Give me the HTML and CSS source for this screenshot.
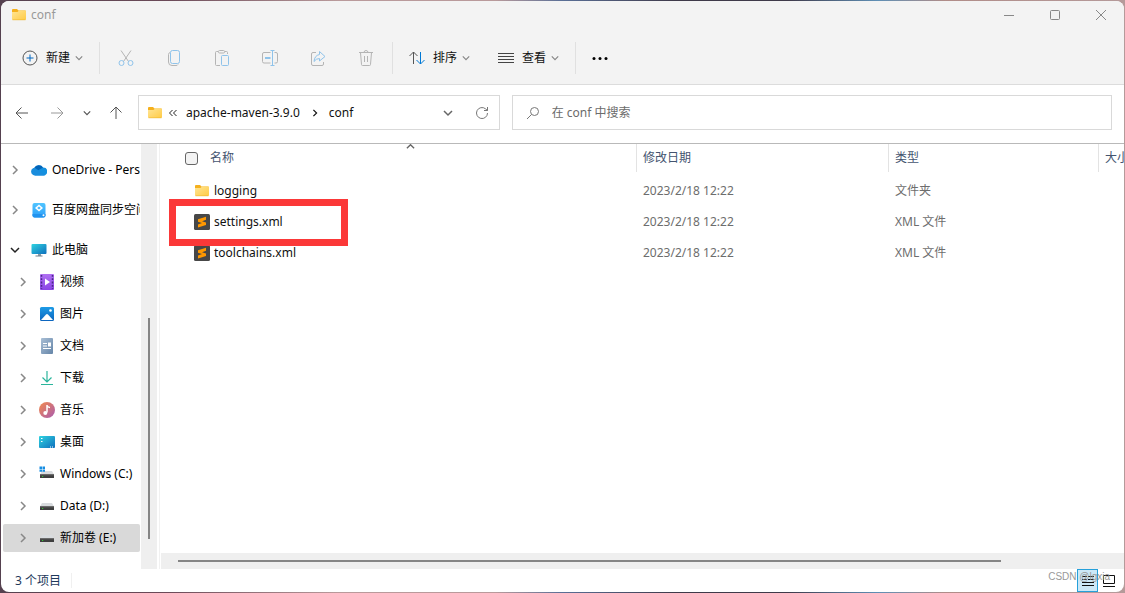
FILE: index.html
```html
<!DOCTYPE html>
<html lang="zh-CN">
<head>
<meta charset="utf-8">
<title>conf</title>
<link rel="stylesheet" href="styles.css">
</head>
<body>
<svg class="defs" aria-hidden="true">
  <defs>
    <linearGradient id="g-folder" x1="0" y1="0" x2="1" y2="1"><stop offset="0" stop-color="#ffe596"/><stop offset="1" stop-color="#ffcb45"/></linearGradient>
    <linearGradient id="g-screen" x1="0" y1="0" x2="1" y2="1"><stop offset="0" stop-color="#2fd3e0"/><stop offset="1" stop-color="#0f6fbd"/></linearGradient>
    <linearGradient id="g-video" x1="0" y1="0" x2="0" y2="1"><stop offset="0" stop-color="#b070f2"/><stop offset="1" stop-color="#8a45e6"/></linearGradient>
    <linearGradient id="g-pic" x1="0" y1="0" x2="0" y2="1"><stop offset="0" stop-color="#1d9be6"/><stop offset="1" stop-color="#0c64bd"/></linearGradient>
    <linearGradient id="g-doc" x1="0" y1="0" x2="1" y2="1"><stop offset="0" stop-color="#a9bfd6"/><stop offset="1" stop-color="#6585a8"/></linearGradient>
    <linearGradient id="g-music" x1="0" y1="0" x2="1" y2="1"><stop offset="0" stop-color="#f38a4c"/><stop offset="1" stop-color="#a95bb0"/></linearGradient>
    <linearGradient id="g-sync" x1="0" y1="0" x2="0" y2="1"><stop offset="0" stop-color="#51c5ff"/><stop offset="1" stop-color="#2a9df8"/></linearGradient>
    <symbol id="i-folder" viewBox="0 0 16 16"><path d="M1 3q0-1 1-1h4l1.500 1.500H14q1 0 1 1V8H1z" fill="#f5b01d"/><path d="M1 5h5.500L8 3.500h6q1 0 1 1V12q0 1-1 1H2q-1 0-1-1z" fill="url(#g-folder)"/><path d="M1.500 12.800h13" stroke="#eeb32b" stroke-width=".6"/></symbol>
    <symbol id="i-right" viewBox="0 0 10 10"><path d="M3 1l4 4-4 4" fill="none" stroke="currentColor" stroke-width="1.500"/></symbol>
    <symbol id="i-down" viewBox="0 0 10 10"><path d="M1 3l4 4 4-4" fill="none" stroke="currentColor" stroke-width="1.500"/></symbol>
    <symbol id="i-drive" viewBox="0 0 16 16"><path d="M3 5h10l2 3.500H1z" fill="#d9dcdf"/><path d="M1 8h14v4H1z" fill="#3f3f3f"/><path d="M1 8h14v1.200H1z" fill="#6b6b6b"/><path d="M3 10.500h1.200" stroke="#3c3" stroke-width="1"/></symbol>
    <symbol id="i-sublime" viewBox="0 0 16 16"><rect width="16" height="16" rx="1.500" fill="#474747"/><path d="M4 5.300L12 2.800v3L8 7.200l4 1.300v2.400L4 13.400v-2.800l4-1.500-4-1.400z" fill="#ff9800"/></symbol>
  </defs>
</svg>

<div class="window">
  <header class="titlebar">
    <svg class="icon16"><use href="#i-folder"/></svg>
    <span class="title">conf</span>
    <button class="winbtn" aria-label="最小化"><svg viewBox="0 0 12 12"><path d="M1 6.500h10"/></svg></button>
    <button class="winbtn" aria-label="最大化"><svg viewBox="0 0 12 12"><rect x="1.500" y="1.500" width="9" height="9" rx="1"/></svg></button>
    <button class="winbtn" aria-label="关闭"><svg viewBox="0 0 12 12"><path d="M1 1l10 10M11 1L1 11"/></svg></button>
  </header>

  <div class="toolbar" role="toolbar">
    <button class="cmd"><svg class="icon16 line" viewBox="0 0 16 16"><circle cx="8" cy="8" r="7" stroke="#555"/><path d="M4.500 8h7M8 4.500v7" stroke="#0067c0"/></svg><span>新建</span><svg class="caret"><use href="#i-down"/></svg></button>
    <span class="sep"></span>
    <button class="tool" aria-label="剪切"><svg class="icon18 line" viewBox="0 0 18 18"><path d="M4 1.500l7.500 11M14 1.500L6.500 12.500" stroke="#b4b4b4"/><circle cx="4.500" cy="14" r="2.500" stroke="#8fc3ea"/><circle cx="13.500" cy="14" r="2.500" stroke="#8fc3ea"/></svg></button>
    <button class="tool" aria-label="复制"><svg class="icon18 line" viewBox="0 0 18 18"><path d="M5 3.500Q3.500 4 3.500 5.500V13q0 3.500 3.500 3.500h4q1.500 0 2-1" stroke="#b4b4b4"/><rect x="5.500" y="1.500" width="9" height="13" rx="2" stroke="#8fc3ea"/></svg></button>
    <button class="tool" aria-label="粘贴"><svg class="icon18 line" viewBox="0 0 18 18"><path d="M7 16.500H3.500q-1 0-1-1v-12q0-1 1-1H5M12 2.500h1.500q1 0 1 1V5" stroke="#b4b4b4"/><rect x="5.500" y="1.500" width="6" height="2.500" rx="1" stroke="#b4b4b4"/><rect x="8.500" y="6.500" width="7" height="10" rx="1" stroke="#8fc3ea"/></svg></button>
    <button class="tool" aria-label="重命名"><svg class="icon18 line" viewBox="0 0 18 18"><path d="M9.500 3.500H3q-1.500 0-1.500 1.500v7.500Q1.500 14 3 14h6.500M13.500 3.500H15q1.500 0 1.500 1.500v7.500Q16.500 14 15 14h-1.500" stroke="#b4b4b4"/><path d="M9.500 1.500h4M11.500 1.500v15M9.500 16.500h4" stroke="#8fc3ea"/><path d="M4 9h5.500" stroke="#8fc3ea" stroke-width="2"/></svg></button>
    <button class="tool" aria-label="共享"><svg class="icon18 line" viewBox="0 0 18 18"><path d="M7 3.500H4Q2.500 3.500 2.500 5v10q0 1.500 1.500 1.500h9q1.500 0 1.500-1.500v-2" stroke="#b4b4b4"/><path d="M10.500 2.500L16 7.500l-5.500 4.500V9.500Q7 9.500 5 12.500q.5-6 5.500-7z" stroke="#8fc3ea"/></svg></button>
    <button class="tool" aria-label="删除"><svg class="icon18 line" viewBox="0 0 18 18"><path d="M2 3.500h14M7 3.500q0-2 2-2t2 2M3.500 3.500l1 12q0 1 1 1h7q1 0 1-1l1-12M7.500 7v6M10.500 7v6" stroke="#b4b4b4"/></svg></button>
    <span class="sep"></span>
    <button class="cmd"><svg class="icon16 line" viewBox="0 0 16 16"><path d="M4.500 14V2M.5 6l4-4 4 4" stroke="#555"/><path d="M11.500 2v12M7.500 10l4 4 4-4" stroke="#0078d4"/></svg><span>排序</span><svg class="caret"><use href="#i-down"/></svg></button>
    <button class="cmd"><svg class="icon16 line" viewBox="0 0 16 16"><path d="M0 3.500h16M0 6.500h16M0 9.500h16M0 12.500h16" stroke="#444"/></svg><span>查看</span><svg class="caret"><use href="#i-down"/></svg></button>
    <span class="sep"></span>
    <button class="tool more" aria-label="更多"><svg class="icon18" viewBox="0 0 18 18"><circle cx="3" cy="9.500" r="1.500"/><circle cx="9" cy="9.500" r="1.500"/><circle cx="15" cy="9.500" r="1.500"/></svg></button>
  </div>

  <div class="location">
    <nav class="history" aria-label="历史">
      <button aria-label="后退"><svg class="icon14 line" viewBox="0 0 14 14"><path d="M13 7H1M6.500 1.500L1 7l5.500 5.500" stroke="#555"/></svg></button>
      <button aria-label="前进"><svg class="icon14 line" viewBox="0 0 14 14"><path d="M1 7h12M7.500 1.500L13 7l-5.500 5.500" stroke="#999"/></svg></button>
      <button class="recent" aria-label="最近"><svg class="caret dark"><use href="#i-down"/></svg></button>
      <button class="up" aria-label="向上"><svg class="icon14 line" viewBox="0 0 14 14"><path d="M7 13V1M1.500 6.500L7 1l5.500 5.500" stroke="#555"/></svg></button>
    </nav>
    <div class="address">
      <svg class="icon16"><use href="#i-folder"/></svg>
      <svg class="chevs line" viewBox="0 0 10 10"><path d="M4.500 2l-3 3 3 3M8.500 2l-3 3 3 3" stroke="#222"/></svg>
      <a href="#">apache-maven-3.9.0</a>
      <svg class="crumb"><use href="#i-right"/></svg>
      <a href="#">conf</a>
      <button class="drop" aria-label="展开"><svg class="icon10"><use href="#i-down"/></svg></button>
      <button aria-label="刷新"><svg class="icon14 line" viewBox="0 0 14 14"><path d="M12.500 7a5.500 5.500 0 1 1-2-4.200l2 1.700M12.500 1v3.500H9" stroke="#777"/></svg></button>
    </div>
    <label class="search">
      <svg class="icon14 line" viewBox="0 0 14 14"><circle cx="8.500" cy="5.500" r="4" stroke="#777"/><path d="M5.500 8.500L1 13" stroke="#777"/></svg>
      <input type="text" placeholder="在 conf 中搜索" aria-label="搜索">
    </label>
  </div>

  <main class="body">
    <nav class="tree" aria-label="导航窗格">
      <ul class="roots">
        <li><div class="node"><button aria-label="展开"><svg><use href="#i-right"/></svg></button><a href="#"><svg class="icon16" viewBox="0 0 16 16"><path d="M4 13.500a4 4 0 0 1-.7-7.500A5 5 0 0 1 12 5.500a4 4 0 0 1 .5 8z" fill="#1490df"/><path d="M3.300 6A5 5 0 0 1 12 5.500L6 9z" fill="#0364b8"/><path d="M4 13.500a4 4 0 0 1-3.300-6q1-1.500 3-1.700L14.500 13q-1 .5-2 .5z" fill="#1a8ddd"/></svg><span>OneDrive - Personal</span></a></div></li>
        <li><div class="node"><button aria-label="展开"><svg><use href="#i-right"/></svg></button><a href="#"><svg class="icon16" viewBox="0 0 16 16"><rect x="1.500" y="1" width="13" height="14.500" rx="2" fill="url(#g-sync)"/><path d="M1.500 12h13v1.500q0 2-2 2h-9q-2 0-2-2z" fill="#2193ef"/><path d="M8 2.500l4 3.500-4 3.500L4 6z" fill="#fff"/><path d="M8 4.500L9.800 6 8 7.500 6.200 6z" fill="#45b7fc"/><circle cx="12.500" cy="13.200" r="1" fill="#fff"/></svg><span>百度网盘同步空间</span></a></div></li>
        <li><div class="node open"><button aria-label="折叠"><svg><use href="#i-down"/></svg></button><a href="#"><svg class="icon16" viewBox="0 0 16 16"><path d="M7 12h3v2H7z" fill="#8b9aa5"/><path d="M4.500 14h7" stroke="#71818d"/><rect x=".5" y="2" width="15" height="10" rx="1" fill="url(#g-screen)"/></svg><span>此电脑</span></a></div>
          <ul class="children">
            <li><div class="node"><button aria-label="展开"><svg><use href="#i-right"/></svg></button><a href="#"><svg class="icon16" viewBox="0 0 16 16"><rect x="1" y="0" width="14" height="16" rx="1" fill="url(#g-video)"/><path d="M2.500 1v14M13.500 1v14" stroke="#4b2788" stroke-width="1.500" stroke-dasharray="1.800 1.500"/><path d="M6 4.500l5 3.500-5 3.500z" fill="#fff"/></svg><span>视频</span></a></div></li>
            <li><div class="node"><button aria-label="展开"><svg><use href="#i-right"/></svg></button><a href="#"><svg class="icon16" viewBox="0 0 16 16"><rect x="1" y="1" width="14" height="14" rx="1.500" fill="url(#g-pic)"/><path d="M2 14l5-5.500q1-1 2 0L14 14z" fill="#fff"/><circle cx="11.500" cy="4.500" r="1.300" fill="#fff"/></svg><span>图片</span></a></div></li>
            <li><div class="node"><button aria-label="展开"><svg><use href="#i-right"/></svg></button><a href="#"><svg class="icon16" viewBox="0 0 16 16"><rect x="2" y="0" width="12" height="16" rx="1" fill="url(#g-doc)"/><path d="M4 5.500h4M4 8h4M4 10.500h8" stroke="#fff"/><path d="M9 4.500h3v4H9z" fill="#fff"/></svg><span>文档</span></a></div></li>
            <li><div class="node"><button aria-label="展开"><svg><use href="#i-right"/></svg></button><a href="#"><svg class="icon16 line" viewBox="0 0 16 16"><path d="M8 1v11M3.500 7.500L8 12l4.500-4.500M2 14.500h12" stroke="#2bb59c" stroke-width="1.200"/></svg><span>下载</span></a></div></li>
            <li><div class="node"><button aria-label="展开"><svg><use href="#i-right"/></svg></button><a href="#"><svg class="icon16" viewBox="0 0 16 16"><circle cx="8" cy="8" r="8" fill="url(#g-music)"/><path d="M8 3v7.500M8 3.500q1 2 3 2" stroke="#fff" stroke-width="1.500" fill="none"/><circle cx="6.300" cy="11" r="2" fill="#fff"/></svg><span>音乐</span></a></div></li>
            <li><div class="node"><button aria-label="展开"><svg><use href="#i-right"/></svg></button><a href="#"><svg class="icon16" viewBox="0 0 16 16"><rect x="0" y="2" width="16" height="12" rx="1" fill="url(#g-screen)"/><path d="M2 4.500h1.500M2 7.500h1.500M11 13h1M13 13h1" stroke="#fff"/></svg><span>桌面</span></a></div></li>
            <li><div class="node"><button aria-label="展开"><svg><use href="#i-right"/></svg></button><a href="#"><svg class="icon16" viewBox="0 0 16 16"><use href="#i-drive"/><path d="M.5.5H3v2.400H.5zM3.500.5H6v2.400H3.500zM.5 3.400H3v2.400H.5zM3.500 3.400H6v2.400H3.500z" fill="#168de2"/></svg><span>Windows (C:)</span></a></div></li>
            <li><div class="node"><button aria-label="展开"><svg><use href="#i-right"/></svg></button><a href="#"><svg class="icon16"><use href="#i-drive"/></svg><span>Data (D:)</span></a></div></li>
            <li><div class="node selected"><button aria-label="展开"><svg><use href="#i-right"/></svg></button><a href="#"><svg class="icon16"><use href="#i-drive"/></svg><span>新加卷 (E:)</span></a></div></li>
          </ul>
        </li>
      </ul>
    </nav>
    <div class="vscroll"><div class="vthumb"></div></div>
    <section class="files">
      <table>
        <colgroup><col class="c-name"><col class="c-date"><col class="c-type"><col></colgroup>
        <thead>
          <tr>
            <th class="name"><label><input type="checkbox">名称</label><svg class="sorted"><use href="#i-down"/></svg></th>
            <th>修改日期</th><th>类型</th><th>大小</th>
          </tr>
        </thead>
        <tbody>
          <tr><td class="file"><a href="#"><svg class="icon16"><use href="#i-folder"/></svg>logging</a></td><td>2023/2/18 12:22</td><td>文件夹</td><td></td></tr>
          <tr><td class="file marked"><a href="#"><svg class="icon16"><use href="#i-sublime"/></svg>settings.xml</a></td><td>2023/2/18 12:22</td><td>XML 文件</td><td></td></tr>
          <tr><td class="file"><a href="#"><svg class="icon16"><use href="#i-sublime"/></svg>toolchains.xml</a></td><td>2023/2/18 12:22</td><td>XML 文件</td><td></td></tr>
        </tbody>
      </table>
      <div class="hscroll"><div class="hthumb"></div></div>
    </section>
  </main>

  <footer class="status">
    <span class="count">3 个项目</span>
    <button class="view active" aria-label="详细信息"><svg class="line" viewBox="0 0 14 14"><path d="M1 2.500h5M7 2.500h6M1 5.500h5M7 5.500h6M1 8.500h12M1 11.500h12" stroke="#111"/></svg></button>
    <button class="view" aria-label="大图标"><svg class="line" viewBox="0 0 14 14"><path d="M1.500 1.500h11v8h-11zM1 12.500h12" stroke="#111"/></svg></button>
    <span class="watermark">CSDN @lgxia</span>
  </footer>
</div>
</body>
</html>
```

FILE: styles.css
```css
*, *::before, *::after { box-sizing: border-box; }
body {
  margin: 0;
  height: 100vh;
  padding: 1px;
  background: linear-gradient(90deg, #55414f, #6b4a58 15%, #b99a9b 30%, #b99a9b 44%, #5a6f96 50%, #3f3a4a 60%, #3f3a4a 70%, #5f8fb5 78%, #b08c88 84%, #b59a9a);
  font-family: "Noto Sans", "Noto Sans CJK SC", sans-serif;
  font-size: 12px;
  line-height: 16px;
  color: #111;
}
button { border: 0; padding: 0; background: none; font: inherit; color: inherit; display: flex; align-items: center; justify-content: center; }
a { color: inherit; text-decoration: none; }
ul { list-style: none; margin: 0; padding: 0; }
svg { flex: none; display: block; }
.defs { position: absolute; width: 0; height: 0; }
.line { fill: none; }
.icon10 { width: 10px; height: 10px; }
.icon14 { width: 14px; height: 14px; }
.icon16 { width: 16px; height: 16px; }
.icon18 { width: 18px; height: 18px; }
.caret { width: 8px; height: 8px; color: #888; }
.caret.dark { color: #555; }

.window { height: 100%; display: flex; flex-direction: column; background: #fff; border-radius: 8px; overflow: hidden; }

.titlebar { display: flex; align-items: center; height: 28px; padding-left: 10px; background: #f3f3f3; }
.title { flex: 1; margin-left: 4px; color: #999; }
.winbtn { width: 46px; height: 28px; }
.winbtn svg { width: 12px; height: 12px; fill: none; stroke: #888; }

.toolbar { display: flex; align-items: center; height: 56px; padding: 2px 0 0 7px; background: #f3f3f3; border-bottom: 1px solid #dcdcdc; }
.cmd { height: 36px; padding: 0 14px; gap: 8px; }
.cmd .caret { margin-left: -3px; }
.tool { width: 48px; height: 36px; }
.tool.more { width: 44px; }
.sep { width: 1px; height: 32px; margin: 0 2px; background: #e0e0e0; }

.location { display: flex; align-items: flex-start; gap: 12px; height: 59px; padding: 10px 12px 0 11px; border-bottom: 1px solid #b9b9b9; }
.history { display: flex; align-items: center; height: 35px; }
.history button { width: 36px; height: 30px; }
.history button:first-child { width: 20px; margin-right: 7px; }
.history .recent { width: 24px; }
.history .up { width: 26px; margin-left: 4px; }
.address, .search { display: flex; align-items: center; height: 35px; border: 1px solid #d9d9d9; min-width: 0; }
.address { flex: 3; padding: 0 10px 0 8px; margin-left: -3px; }
.address a:first-of-type { margin-left: 8px; }
.chevs { width: 10px; height: 10px; margin-left: 5px; }
.crumb { width: 8px; height: 8px; margin: 0 10px 0 11px; }
.drop { margin: 0 22px 0 auto; color: #666; }
.search { flex: 5; padding: 0 16px 0 13px; gap: 12px; }
.search input { flex: 1; min-width: 0; border: 0; padding: 0; outline: 0; background: none; font: inherit; }
.search input::placeholder { color: #6b6b6b; opacity: 1; }

.body { flex: 1; min-height: 0; display: flex; }
.tree { width: 140px; padding: 12px 1px 0 2px; overflow: hidden; }
.roots { display: grid; grid-template-columns: 100%; gap: 12px; }
.children { display: grid; grid-template-columns: 100%; gap: 4px; margin-top: 4px; }
.node { display: flex; align-items: center; height: 28px; padding-left: 7px; border-radius: 2px; overflow: hidden; color: #000; }
.node button { margin-right: 11px; color: #888; }
.node button svg { width: 10px; height: 10px; }
.node.open button { color: #222; }
.node a { display: flex; align-items: center; gap: 5px; white-space: nowrap; }
.children .node { padding-left: 15px; }
.node.selected { background: #d9d9d9; }
.vscroll { width: 16px; padding-left: 7px; background: #efefef; }
.vthumb { width: 2px; height: 52%; position: relative; top: 41%; background: #858585; }

.files { flex: 1; min-width: 0; margin-left: 2px; padding-left: 1px; border-left: 1px solid #f1f1f1; display: flex; flex-direction: column; }
table { width: 100%; table-layout: fixed; border-collapse: separate; border-spacing: 0; }
.c-name { width: 476px; }
.c-date { width: 252px; }
.c-type { width: 210px; }
th, td { padding: 0 0 0 6px; text-align: left; font-weight: 400; white-space: nowrap; }
th { height: 28px; overflow: hidden; color: #44546f; border-right: 1px solid #e3e3e3; }
th:last-child { border-right: 0; }
td { height: 31px; color: #6d6d6d; }
tbody::before { content: ""; display: block; height: 3px; }
.name { position: relative; padding-left: 24px; }
.name label { display: flex; align-items: center; gap: 12px; }
.name input { appearance: none; width: 13px; height: 13px; margin: 0; border: 1px solid #666; border-radius: 3px; background: #f3f3f3; }
.sorted { position: absolute; top: -2px; left: 245px; width: 9px; height: 9px; color: #666; transform: rotate(180deg); }
.file { position: relative; padding-left: 33px; color: #111; }
.file a { display: flex; align-items: center; gap: 4px; }
.marked::after { content: ""; position: absolute; z-index: 1; left: 8px; top: -7px; width: 179px; height: 47px; border: 7px solid #fb3838; }
.hscroll { margin-top: auto; height: 16px; padding: 7px 0 0 17px; background: #efefef; }
.hthumb { width: 87%; height: 2px; background: #858585; }

.status { position: relative; display: flex; align-items: stretch; height: 23px; padding: 0 5px 0 14px; color: #1e395b; }
.count { display: flex; align-items: center; margin: 4px auto 4px 0; padding-right: 10px; border-right: 1px solid #f0f0f0; }
.view { width: 21px; }
.view svg { width: 14px; height: 14px; }
.view.active { border: 1px solid #26a0da; background: #cce8f7; }
.watermark { position: absolute; right: 14px; top: 0; font-family: "Liberation Sans", sans-serif; font-size: 10px; color: #999; }
```
